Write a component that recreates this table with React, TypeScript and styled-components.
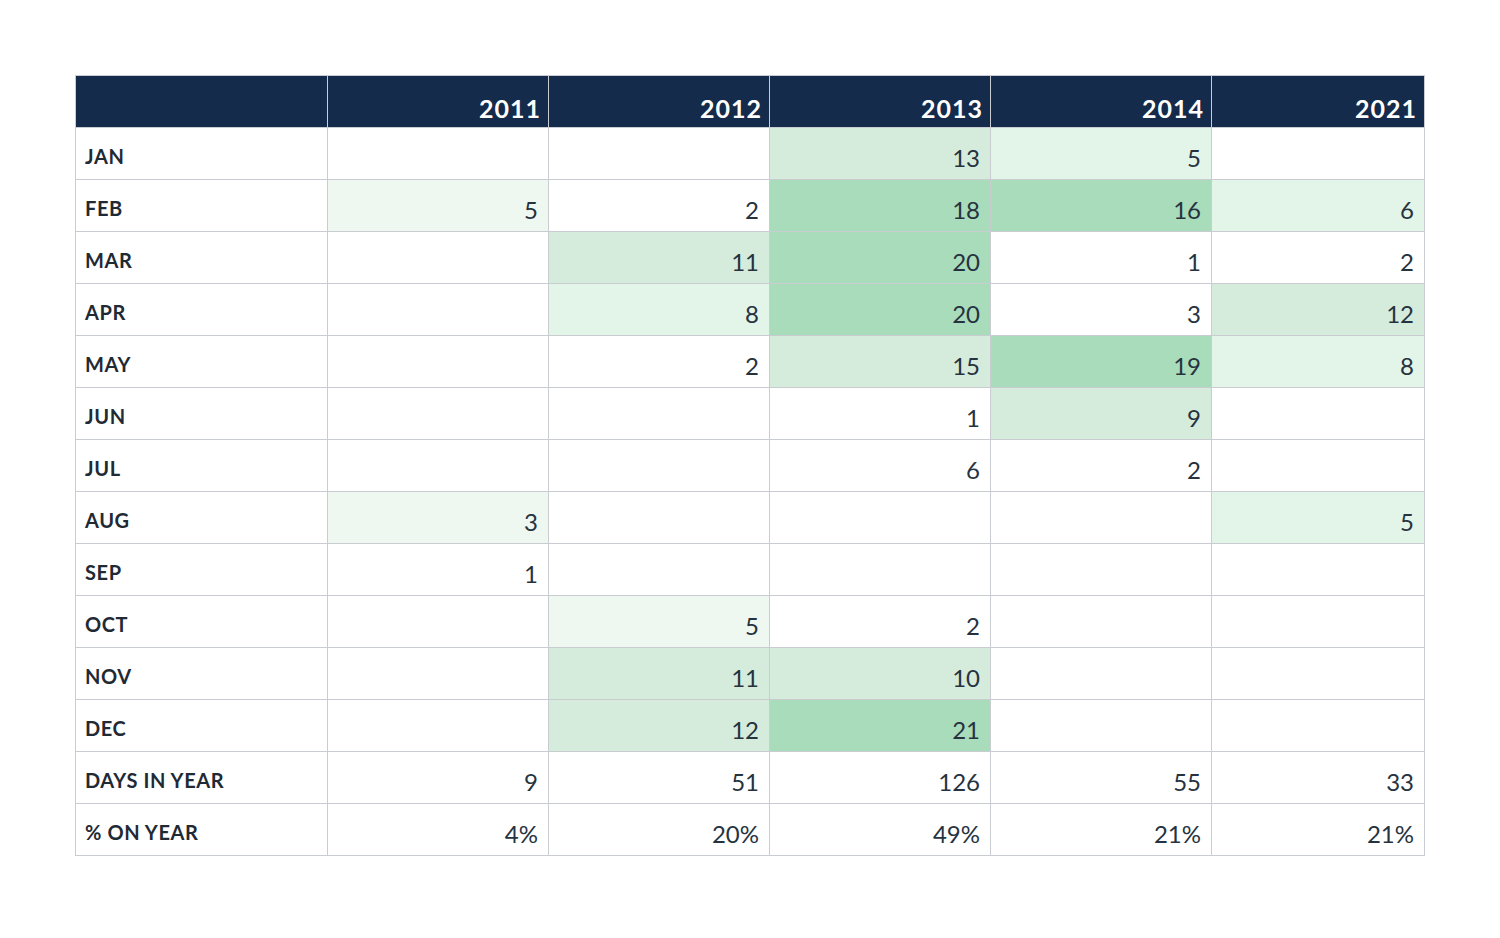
import styled, { createGlobalStyle } from "styled-components";

type Shade = 0 | 1 | 2 | 3 | 4;

const shades: Record<Shade, string> = {
  0: "#ffffff",
  1: "#eef8f1",
  2: "#e3f4e9",
  3: "#d5ecdd",
  4: "#a9dcbb",
};

const years = ["2011", "2012", "2013", "2014", "2021"];

// each cell: [value, shade]
const months: { label: string; cells: [string, Shade][] }[] = [
  { label: "JAN", cells: [["", 0], ["", 0], ["13", 3], ["5", 2], ["", 0]] },
  { label: "FEB", cells: [["5", 1], ["2", 0], ["18", 4], ["16", 4], ["6", 2]] },
  { label: "MAR", cells: [["", 0], ["11", 3], ["20", 4], ["1", 0], ["2", 0]] },
  { label: "APR", cells: [["", 0], ["8", 2], ["20", 4], ["3", 0], ["12", 3]] },
  { label: "MAY", cells: [["", 0], ["2", 0], ["15", 3], ["19", 4], ["8", 2]] },
  { label: "JUN", cells: [["", 0], ["", 0], ["1", 0], ["9", 3], ["", 0]] },
  { label: "JUL", cells: [["", 0], ["", 0], ["6", 0], ["2", 0], ["", 0]] },
  { label: "AUG", cells: [["3", 1], ["", 0], ["", 0], ["", 0], ["5", 2]] },
  { label: "SEP", cells: [["1", 0], ["", 0], ["", 0], ["", 0], ["", 0]] },
  { label: "OCT", cells: [["", 0], ["5", 1], ["2", 0], ["", 0], ["", 0]] },
  { label: "NOV", cells: [["", 0], ["11", 3], ["10", 3], ["", 0], ["", 0]] },
  { label: "DEC", cells: [["", 0], ["12", 3], ["21", 4], ["", 0], ["", 0]] },
  { label: "DAYS IN YEAR", cells: [["9", 0], ["51", 0], ["126", 0], ["55", 0], ["33", 0]] },
  { label: "% ON YEAR", cells: [["4%", 0], ["20%", 0], ["49%", 0], ["21%", 0], ["21%", 0]] },
];

export default function App() {
  return (
    <Page>
      <GlobalStyle />
      <Table>
        <HeadCell />
        {years.map((y) => (
          <HeadCell key={y}>{y}</HeadCell>
        ))}
        {months.map((row) => (
          <Row key={row.label}>
            <LabelCell>{row.label}</LabelCell>
            {row.cells.map(([v, s], i) => (
              <ValueCell key={i} $shade={s}>
                {v}
              </ValueCell>
            ))}
          </Row>
        ))}
      </Table>
    </Page>
  );
}

const GlobalStyle = createGlobalStyle`
  body {
    margin: 0;
    background: #ffffff;
    font-family: Lato, "Open Sans", sans-serif;
  }
`;

const Page = styled.div`
  padding: 75px 0 0 75px;
`;

const Table = styled.div`
  display: grid;
  grid-template-columns: 252px 221px 221px 221px 221px 213px;
  grid-auto-rows: 52px;
  width: 1350px;
  box-sizing: border-box;
  border-left: 1px solid #c9cdd1;
  border-top: 1px solid #c9cdd1;
`;

const Row = styled.div`
  display: contents;
`;

const Cell = styled.div`
  box-sizing: border-box;
  border-right: 1px solid #c9cdd1;
  border-bottom: 1px solid #c9cdd1;
  display: flex;
  align-items: center;
  padding: 5px 10px 0;
  color: #26333f;
`;

const HeadCell = styled(Cell)`
  background: #142b4b;
  color: #ffffff;
  justify-content: flex-end;
  font-size: 25px;
  font-weight: 700;
  letter-spacing: 1px;
  padding-right: 7px;
  padding-top: 12px;
`;

const LabelCell = styled(Cell)`
  font-size: 20px;
  font-weight: 700;
  letter-spacing: 0.6px;
  padding-left: 9px;
  color: #1f2a35;
`;

const ValueCell = styled(Cell)<{ $shade: Shade }>`
  background: ${(p) => shades[p.$shade]};
  justify-content: flex-end;
  font-size: 24px;
  font-weight: 400;
  padding-top: 7px;
`;
